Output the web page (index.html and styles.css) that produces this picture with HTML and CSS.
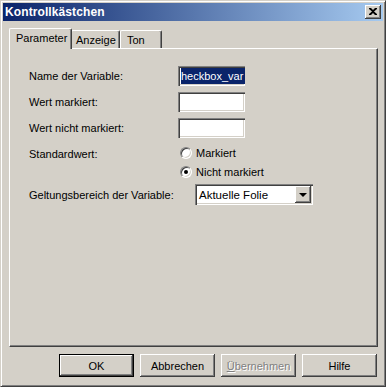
FILE: index.html
```html
<!DOCTYPE html>
<html lang="de">
<head>
  <meta charset="UTF-8" />
  <title>Kontrollkästchen</title>
  <link rel="stylesheet" href="styles.css">
</head>
<body>
  <div class="window">
    <div class="titlebar">
      <span class="title">Kontrollkästchen</span>
      <div class="close-btn">
        <svg width="8" height="7" viewBox="0 0 8 7">
          <path d="M0 0h2l2 2 2-2h2v1L5 3.5 8 6v1H6L4 5 2 7H0V6l3-2.5L0 1z" fill="#000"/>
        </svg>
      </div>
    </div>

    <div class="dialog-body">
      <div class="tabs">
        <div class="tab active tab-param">Parameter</div>
        <div class="tab tab-anzeige">Anzeige</div>
        <div class="tab tab-ton">Ton</div>
      </div>

      <div class="panel">
        <div class="form-grid">
          <label class="field-label">Name der Variable:</label>
          <div class="textfield"><span class="selected-text">heckbox_var</span></div>

          <label class="field-label">Wert markiert:</label>
          <div class="textfield"></div>

          <label class="field-label">Wert nicht markiert:</label>
          <div class="textfield"></div>
        </div>

        <div class="radio-section">
          <div class="field-label">Standardwert:</div>
          <div class="radio-list">
            <div class="radio-row"><span class="radio"></span>Markiert</div>
            <div class="radio-row"><span class="radio checked"></span>Nicht markiert</div>
          </div>
        </div>

        <div class="scope-row">
          <div class="field-label scope-label">Geltungsbereich der Variable:</div>
          <div class="combo">
            <span class="combo-text">Aktuelle Folie</span>
            <span class="combo-btn"><span class="arrow"></span></span>
          </div>
        </div>
      </div>

      <div class="button-row">
        <div class="btn default"><span class="btn-inner">OK</span></div>
        <div class="btn"><span class="btn-inner">Abbrechen</span></div>
        <div class="btn disabled"><span class="btn-inner"><u>Ü</u>bernehmen</span></div>
        <div class="btn"><span class="btn-inner">Hilfe</span></div>
      </div>
    </div>
  </div>
</body>
</html>
```

FILE: styles.css
```css
html, body {
  margin: 0;
  padding: 0;
  background-color: #D4D0C8;
}
body {
  font-family: 'Liberation Sans', Arial, sans-serif;
  font-size: 11px;
  color: #000000;
}
.window {
  width: 386px;
  height: 387px;
  box-sizing: border-box;
  border: 1px solid;
  border-color: #D4D0C8 #404040 #404040 #D4D0C8;
  box-shadow: inset 1px 1px #ffffff, inset -1px -1px #808080;
  padding: 2px;
  background-color: #D4D0C8;
  display: flex;
  flex-direction: column;
}
.titlebar {
  height: 18px;
  background: linear-gradient(to right, #0A246A, #A6CAF0);
  display: flex;
  align-items: center;
  justify-content: space-between;
  padding: 0 2px 0 2px;
}
.title {
  color: #ffffff;
  font-weight: bold;
  font-size: 12px;
  letter-spacing: 0.1px;
}
.close-btn {
  width: 16px;
  height: 14px;
  box-sizing: border-box;
  background-color: #D4D0C8;
  box-shadow: inset -1px -1px #404040, inset 1px 1px #ffffff, inset -2px -2px #808080;
  display: flex;
  align-items: center;
  justify-content: center;
  padding-bottom: 1px;
}
.dialog-body {
  padding: 8px 5px 0 6px;
}
.tabs {
  display: flex;
  align-items: flex-end;
  height: 19px;
  padding-left: 1px;
}
.tab {
  height: 18px;
  box-sizing: border-box;
  padding: 3px 0 0 6px;
  border-top: 1px solid #ffffff;
  border-left: 1px solid #ffffff;
  border-right: 1px solid #404040;
  box-shadow: inset -1px 0 #808080;
  border-radius: 2px 2px 0 0;
  white-space: nowrap;
}
.tab-param {
  width: 63px;
}
.tab-anzeige {
  width: 49px;
  padding-left: 4px;
}
.tab-ton {
  width: 42px;
}
.tab.active {
  height: 21px;
  padding: 3px 0 0 6px;
  margin-left: -1px;
  margin-right: -1px;
  margin-bottom: -1px;
  background-color: #D4D0C8;
  position: relative;
  z-index: 1;
}
.panel {
  height: 299px;
  box-sizing: border-box;
  border-top: 1px solid #ffffff;
  border-left: 1px solid #ffffff;
  border-right: 1px solid #404040;
  border-bottom: 1px solid #404040;
  box-shadow: inset -1px -1px #808080;
  padding: 17px 0 0 19px;
}
.form-grid {
  display: grid;
  grid-template-columns: 149px 67px;
  grid-auto-rows: 20px;
  row-gap: 6px;
  align-items: center;
}
.field-label {
  line-height: 14px;
}
.textfield {
  height: 20px;
  box-sizing: border-box;
  background-color: #ffffff;
  box-shadow: inset 1px 1px #808080, inset 2px 2px #404040, inset -1px -1px #ffffff, inset -2px -2px #D4D0C8;
  display: flex;
  align-items: center;
  overflow: hidden;
  padding: 2px 2px 2px 3px;
  white-space: nowrap;
}
.selected-text {
  background-color: #0A246A;
  color: #ffffff;
  font-size: 11px;
  line-height: 16px;
  padding-right: 2px;
}
.radio-section {
  display: flex;
  margin-top: 8px;
}
.radio-section .field-label {
  width: 151px;
  padding-top: 1px;
}
.radio-list {
  display: flex;
  flex-direction: column;
  gap: 5px;
}
.radio-row {
  display: flex;
  align-items: center;
  height: 14px;
  gap: 4px;
}
.radio {
  width: 12px;
  height: 12px;
  box-sizing: border-box;
  border-radius: 50%;
  border: 1px solid;
  border-color: #808080 #ffffff #ffffff #808080;
  box-shadow: inset 1px 1px #404040, inset -1px -1px #D4D0C8;
  background-color: #ffffff;
  display: flex;
  align-items: center;
  justify-content: center;
}
.radio.checked::after {
  content: "";
  width: 4px;
  height: 4px;
  border-radius: 50%;
  background-color: #000000;
}
.scope-row {
  display: flex;
  align-items: center;
  margin-top: 5px;
}
.scope-label {
  width: 166px;
}
.combo {
  width: 118px;
  height: 21px;
  box-sizing: border-box;
  background-color: #ffffff;
  box-shadow: inset 1px 1px #808080, inset 2px 2px #404040, inset -1px -1px #ffffff, inset -2px -2px #D4D0C8;
  display: flex;
  align-items: center;
  justify-content: space-between;
  padding: 2px;
}
.combo-text {
  padding-left: 2px;
  font-size: 11.5px;
}
.combo-btn {
  width: 16px;
  height: 17px;
  box-sizing: border-box;
  background-color: #D4D0C8;
  box-shadow: inset -1px -1px #404040, inset 1px 1px #ffffff, inset -2px -2px #808080;
  display: flex;
  align-items: center;
  justify-content: center;
}
.arrow {
  width: 0;
  height: 0;
  border-left: 4px solid transparent;
  border-right: 4px solid transparent;
  border-top: 4px solid #000000;
  margin-right: 1px;
}
.button-row {
  display: flex;
  justify-content: flex-end;
  gap: 6px;
  margin-top: 7px;
  padding-right: 1px;
}
.btn {
  width: 75px;
  height: 23px;
  box-sizing: border-box;
  background-color: #D4D0C8;
  box-shadow: inset -1px -1px #404040, inset 1px 1px #ffffff, inset -2px -2px #808080;
  display: flex;
  align-items: center;
  justify-content: center;
  font-size: 11px;
}
.btn.default {
  border: 1px solid #000000;
  box-shadow: none;
}
.btn.default .btn-inner {
  width: 100%;
  height: 100%;
  box-sizing: border-box;
  box-shadow: inset -1px -1px #404040, inset 1px 1px #ffffff, inset -2px -2px #808080;
  display: flex;
  align-items: center;
  justify-content: center;
}
.btn.disabled {
  color: #808080;
  text-shadow: 1px 1px #ffffff;
}
```
